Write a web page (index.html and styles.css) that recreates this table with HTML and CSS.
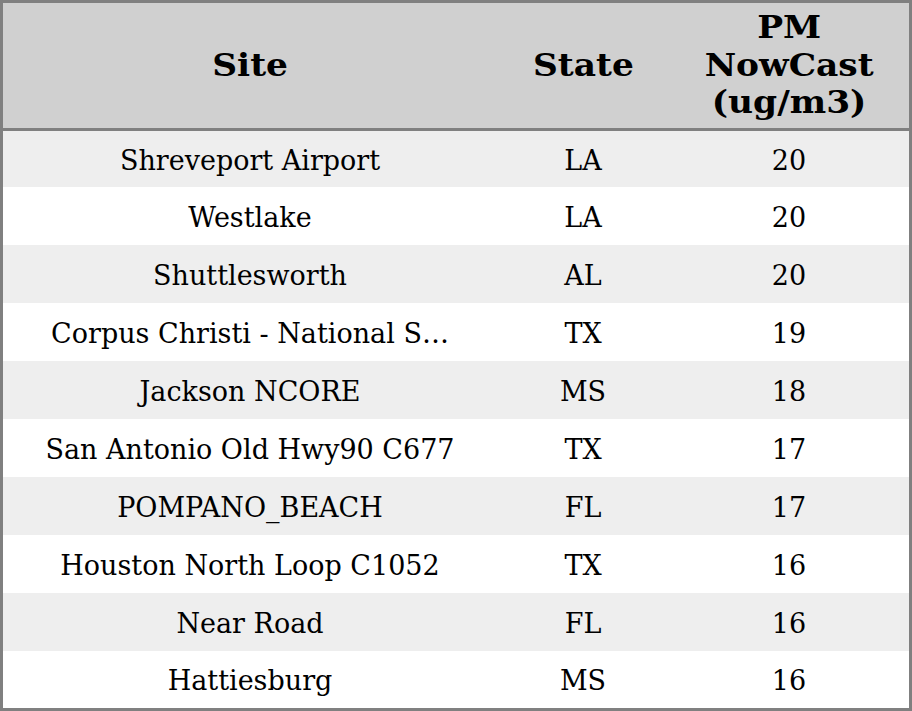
FILE: index.html
```html
<!DOCTYPE html>
<html>
<head>
<meta charset="utf-8">
<link rel="stylesheet" href="styles.css">
</head>
<body>
<div class="frame">
<table class="grid">
<colgroup><col class="c-site"><col class="c-state"><col class="c-pm"></colgroup>
<thead>
<tr class="head"><th><span class="hl">Site</span></th><th><span class="hl">State</span></th><th><span class="hl">PM<br>NowCast<br>(ug/m3)</span></th></tr>
</thead>
<tbody>
<tr class="odd first"><td>Shreveport Airport</td><td>LA</td><td>20</td></tr>
<tr><td>Westlake</td><td>LA</td><td>20</td></tr>
<tr class="odd"><td>Shuttlesworth</td><td>AL</td><td>20</td></tr>
<tr><td>Corpus Christi - National S…</td><td>TX</td><td>19</td></tr>
<tr class="odd"><td>Jackson NCORE</td><td>MS</td><td>18</td></tr>
<tr><td>San Antonio Old Hwy90 C677</td><td>TX</td><td>17</td></tr>
<tr class="odd"><td>POMPANO_BEACH</td><td>FL</td><td>17</td></tr>
<tr><td>Houston North Loop C1052</td><td>TX</td><td>16</td></tr>
<tr class="odd"><td>Near Road</td><td>FL</td><td>16</td></tr>
<tr class="last"><td>Hattiesburg</td><td>MS</td><td>16</td></tr>
</tbody>
</table>
</div>
</body>
</html>
```
FILE: styles.css
```css
html, body {
  margin: 0;
  padding: 0;
  background: #ffffff;
}
.frame {
  width: 912px;
  height: 711px;
  box-sizing: border-box;
  border: 3px solid #808080;
  overflow: hidden;
  background: #ffffff;
}
.grid {
  width: 906px;
  border-collapse: collapse;
  table-layout: fixed;
  font-family: "DejaVu Serif", serif;
  color: #000000;
}
.c-site { width: 494px; }
.c-state { width: 172px; }
.c-pm { width: 240px; }
.grid th, .grid td {
  padding: 0;
  text-align: center;
  vertical-align: middle;
  white-space: nowrap;
  overflow: hidden;
}
.head {
  background: #d0d0d0;
  height: 125px;
  border-bottom: 3px solid #808080;
}
.head th {
  font-size: 31px;
  font-weight: bold;
  line-height: 37.5px;
  height: 125px;
}
.hl {
  display: inline-block;
  transform: scaleX(1.11);
}
.grid td {
  font-size: 27px;
  height: 56px;
  padding-top: 2px;
}
.grid tr.first td { height: 54px; }
.grid tr.last td { height: 55px; }
.odd { background: #eeeeee; }
```
